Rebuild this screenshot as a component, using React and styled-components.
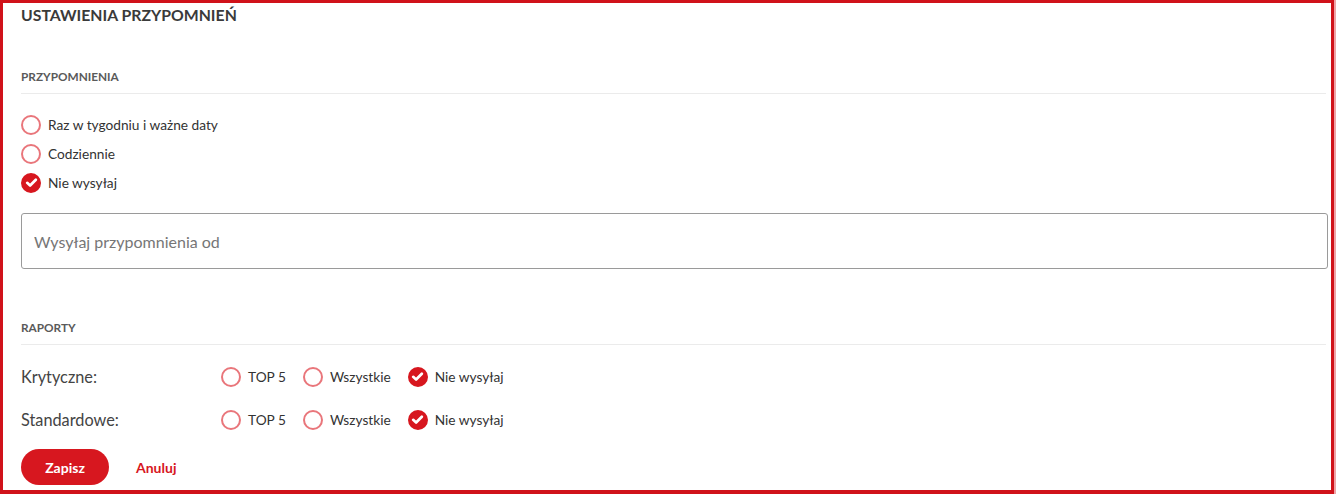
import React, { useState } from "react";
import styled, { createGlobalStyle } from "styled-components";

const RED = "#d7171f";

const Global = createGlobalStyle`
  html, body {
    margin: 0;
    padding: 0;
    background: #ffffff;
  }
  body {
    font-family: Lato, "Open Sans", "Liberation Sans", sans-serif;
    color: #333333;
  }
  * {
    box-sizing: border-box;
  }
`;

const Frame = styled.div`
  width: 1334px;
  height: 494px;
  border: 3px solid #d0121a;
  border-bottom-width: 4px;
  box-shadow: 2px 0 0 #efa3a6;
  padding: 2px 5px 0 18px;
  overflow: hidden;
  background: #ffffff;
`;

const Title = styled.h1`
  margin: 0;
  font-size: 15.8px;
  line-height: 20px;
  font-weight: 700;
  color: #3a3a3a;
`;

const SectionHead = styled.h2`
  margin: ${({ $top }) => $top}px 0 0;
  padding-bottom: 8px;
  border-bottom: 1px solid #ebebeb;
  font-size: 11.8px;
  line-height: 16px;
  font-weight: 700;
  color: #5a5a5a;
`;

const List = styled.div`
  display: flex;
  flex-direction: column;
  margin-top: 16px;
`;

const Option = styled.label`
  display: flex;
  align-items: center;
  gap: 7px;
  height: ${({ $h }) => $h || 29}px;
  font-size: 13.7px;
  color: #333333;
  cursor: pointer;
`;

const Circle = styled.span`
  width: 20px;
  height: 20px;
  border-radius: 50%;
  flex: 0 0 auto;
  display: inline-flex;
  align-items: center;
  justify-content: center;
  border: 2px solid ${({ $on }) => ($on ? RED : "#e9767b")};
  background: ${({ $on }) => ($on ? RED : "#ffffff")};
`;

const Field = styled.input`
  display: block;
  width: 1307px;
  height: 56px;
  margin-top: 16px;
  padding: 0 12px;
  border: 1px solid #9a9a9a;
  border-radius: 3px;
  font-family: inherit;
  font-size: 16px;
  color: #333333;
  outline: none;
  &::placeholder {
    color: #767676;
  }
`;

const Rows = styled.div`
  margin-top: 10px;
`;

const ReportRow = styled.div`
  display: grid;
  grid-template-columns: 200px auto;
  align-items: center;
  height: 43px;
`;

const RowLabel = styled.span`
  font-size: 16.3px;
  color: #444444;
`;

const Choices = styled.div`
  display: flex;
  align-items: center;
  gap: 17px;
`;

const Actions = styled.div`
  display: flex;
  align-items: center;
  gap: 27px;
  margin-top: 8px;
`;

const Primary = styled.button`
  width: 88px;
  height: 36px;
  border: none;
  border-radius: 18px;
  background: ${RED};
  color: #ffffff;
  font-family: inherit;
  font-size: 14px;
  font-weight: 700;
  cursor: pointer;
`;

const Link = styled.button`
  border: none;
  background: transparent;
  padding: 0;
  color: ${RED};
  font-family: inherit;
  font-size: 14px;
  font-weight: 700;
  cursor: pointer;
`;

function Radio({ on }) {
  return (
    <Circle $on={on}>
      {on && (
        <svg width="13" height="13" viewBox="0 0 12 12">
          <path
            d="M2 6.3 L4.7 8.8 L10 3.4"
            fill="none"
            stroke="#ffffff"
            strokeWidth="2.5"
            strokeLinecap="round"
            strokeLinejoin="round"
          />
        </svg>
      )}
    </Circle>
  );
}

const REMINDERS = ["Raz w tygodniu i ważne daty", "Codziennie", "Nie wysyłaj"];
const LEVELS = ["TOP 5", "Wszystkie", "Nie wysyłaj"];

export default function App() {
  const [reminder, setReminder] = useState(2);
  const [reports, setReports] = useState({ Krytyczne: 2, Standardowe: 2 });

  return (
    <>
      <Global />
      <Frame>
        <Title>USTAWIENIA PRZYPOMNIEŃ</Title>

        <SectionHead $top={44}>PRZYPOMNIENIA</SectionHead>
        <List>
          {REMINDERS.map((text, i) => (
            <Option key={text} onClick={() => setReminder(i)}>
              <Radio on={reminder === i} />
              {text}
            </Option>
          ))}
        </List>
        <Field placeholder="Wysyłaj przypomnienia od" />

        <SectionHead $top={51}>RAPORTY</SectionHead>
        <Rows>
          {Object.keys(reports).map((name) => (
            <ReportRow key={name}>
              <RowLabel>{name}:</RowLabel>
              <Choices>
                {LEVELS.map((text, i) => (
                  <Option
                    key={text}
                    $h={24}
                    onClick={() => setReports((r) => ({ ...r, [name]: i }))}
                  >
                    <Radio on={reports[name] === i} />
                    {text}
                  </Option>
                ))}
              </Choices>
            </ReportRow>
          ))}
        </Rows>

        <Actions>
          <Primary type="button">Zapisz</Primary>
          <Link type="button">Anuluj</Link>
        </Actions>
      </Frame>
    </>
  );
}
